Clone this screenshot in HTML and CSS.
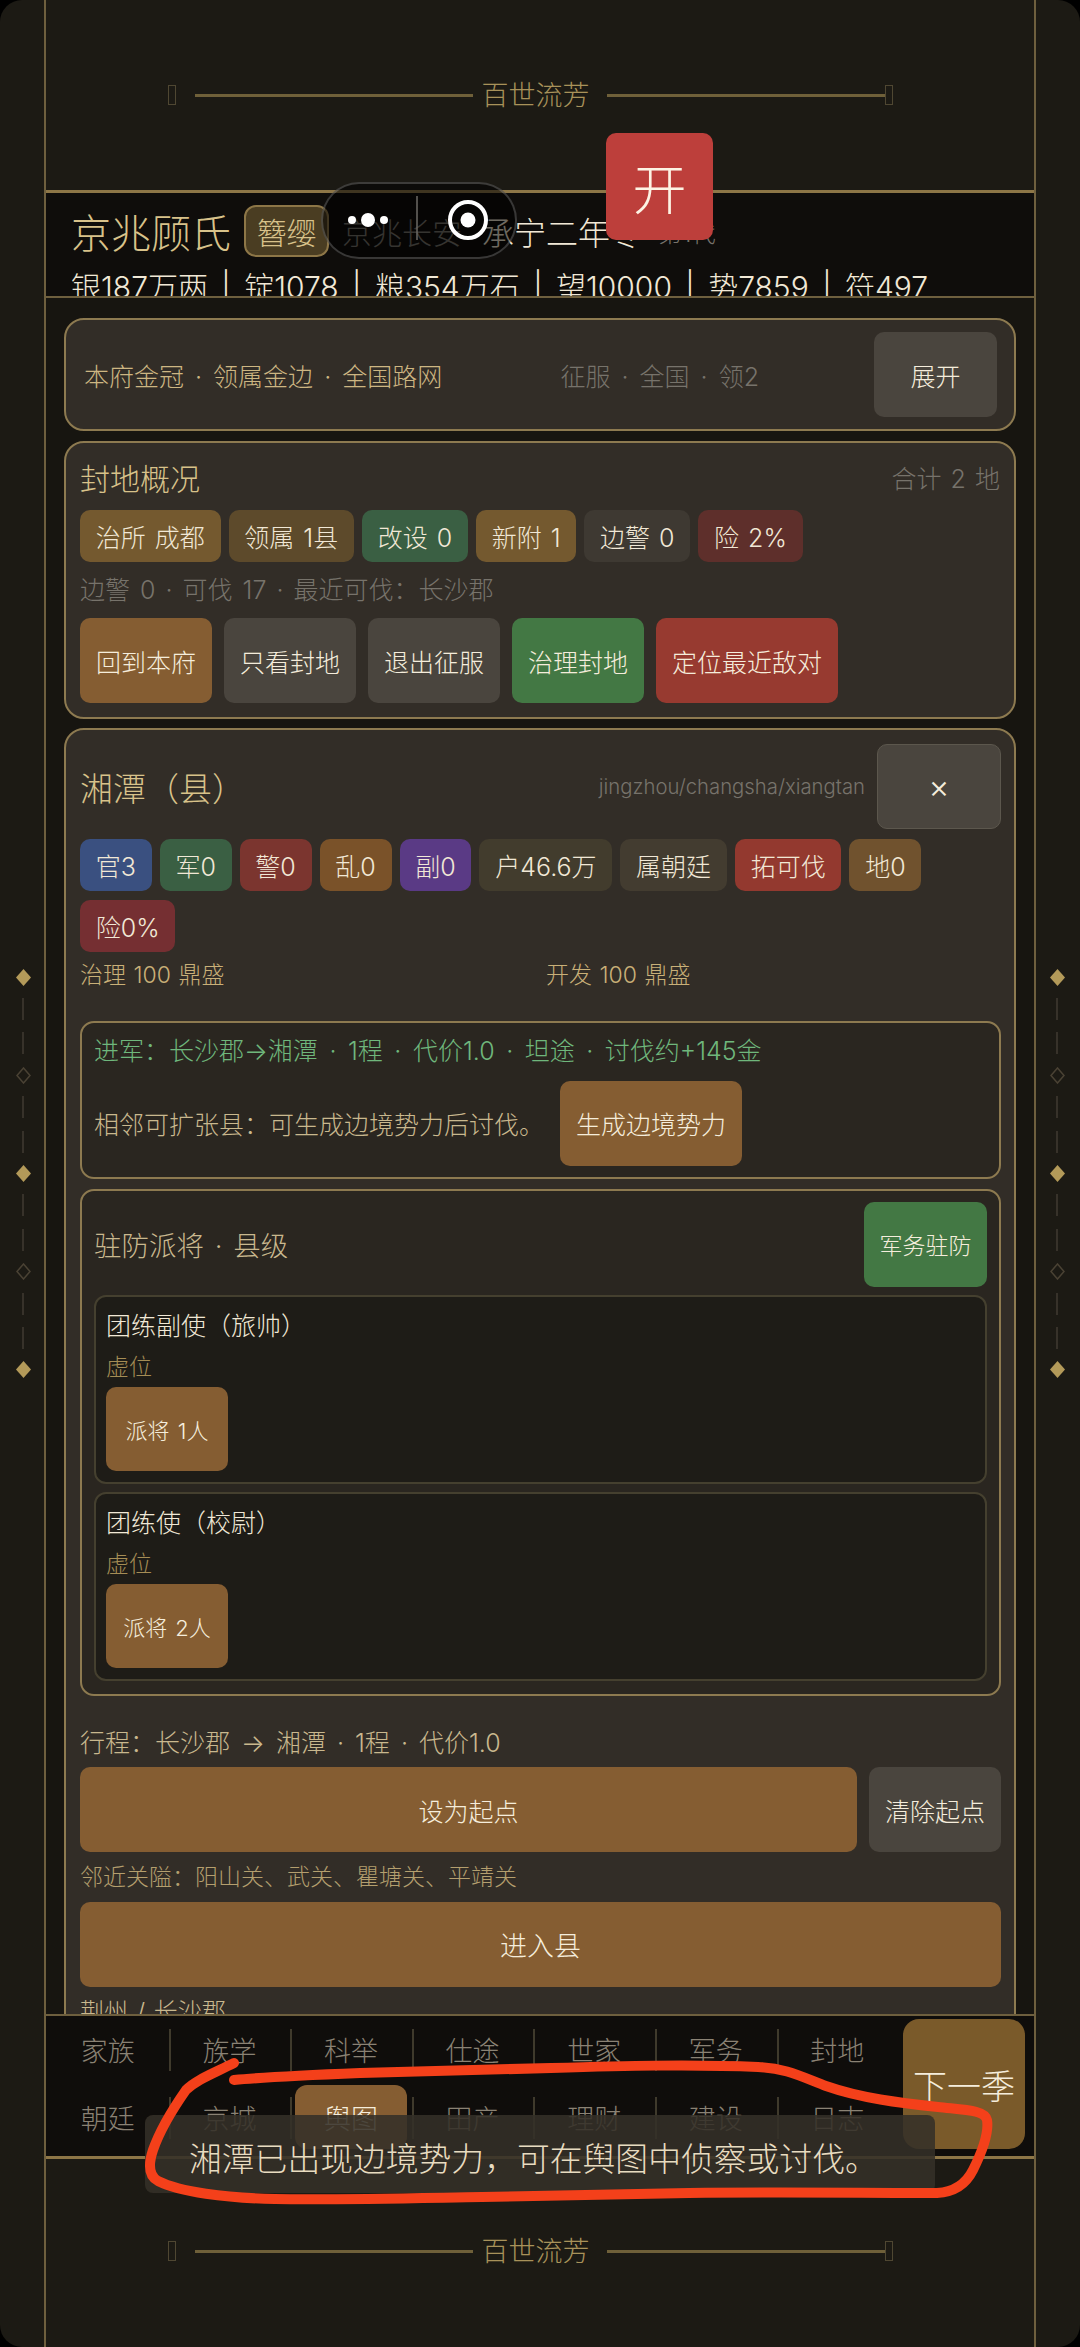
FILE: index.html
```html
<!DOCTYPE html>
<html lang="zh-CN">
<head>
    <meta charset="UTF-8">
    <meta name="viewport" content="width=device-width, initial-scale=1.0">
    <title>百世流芳</title>
    <link rel="stylesheet" href="styles.css">
</head>
<body>
<div class="screen">
    <!-- Left ornament -->
    <div class="side side-l">
        <svg class="gem" viewBox="0 0 15 17"><polygon class="gem-on" points="7.5,0 15,8.5 7.5,17 0,8.5"/></svg>
        <i class="dash"></i><i class="dash"></i>
        <svg class="gem" viewBox="0 0 15 17"><polygon class="gem-off" points="7.5,1 14,8.5 7.5,16 1,8.5"/></svg>
        <i class="dash"></i><i class="dash"></i>
        <svg class="gem" viewBox="0 0 15 17"><polygon class="gem-on" points="7.5,0 15,8.5 7.5,17 0,8.5"/></svg>
        <i class="dash"></i><i class="dash"></i>
        <svg class="gem" viewBox="0 0 15 17"><polygon class="gem-off" points="7.5,1 14,8.5 7.5,16 1,8.5"/></svg>
        <i class="dash"></i><i class="dash"></i>
        <svg class="gem" viewBox="0 0 15 17"><polygon class="gem-on" points="7.5,0 15,8.5 7.5,17 0,8.5"/></svg>
    </div>

    <div class="frame">
        <div class="deco deco-top">
            <i class="deco-end"></i><i class="deco-line"></i>
            <span class="deco-text">百世流芳</span>
            <i class="deco-line"></i><i class="deco-end"></i>
        </div>

        <!-- Header -->
        <div class="head">
            <div class="head-row">
                <span class="clan">京兆顾氏</span>
                <span class="rank">簪缨</span>
                <span class="place">京兆长安</span>
                <span class="date">承宁二年冬</span>
                <span class="gen">第1代</span>
            </div>
            <div class="res">银187万两 | 锭1078 | 粮354万石 | 望10000 | 势7859 | 符497</div>
        </div>

        <!-- Main content -->
        <div class="main">
            <div class="card card-legend">
                <span class="legend">本府金冠 · 领属金边 · 全国路网</span>
                <span class="conquest">征服 · 全国 · 领2</span>
                <button class="btn btn-gray">展开</button>
            </div>

            <div class="card card-fief">
                <div class="card-head">
                    <span class="card-title">封地概况</span>
                    <span class="muted">合计 2 地</span>
                </div>
                <div class="tags">
                    <span class="tag t-gold">治所 成都</span>
                    <span class="tag t-umber">领属 1县</span>
                    <span class="tag t-green">改设 0</span>
                    <span class="tag t-gold">新附 1</span>
                    <span class="tag t-stone">边警 0</span>
                    <span class="tag t-wine">险 2%</span>
                </div>
                <div class="muted fief-note">边警 0 · 可伐 17 · 最近可伐：长沙郡</div>
                <div class="btn-row">
                    <button class="btn btn-brown">回到本府</button>
                    <button class="btn btn-gray">只看封地</button>
                    <button class="btn btn-gray">退出征服</button>
                    <button class="btn btn-green">治理封地</button>
                    <button class="btn btn-red">定位最近敌对</button>
                </div>
            </div>

            <div class="card card-county">
                <div class="county-head">
                    <span class="county-name">湘潭（县）</span>
                    <span class="county-path">jingzhou/changsha/xiangtan</span>
                    <button class="btn btn-gray btn-close">×</button>
                </div>
                <div class="tags county-tags">
                    <span class="tag t-blue">官3</span>
                    <span class="tag t-green">军0</span>
                    <span class="tag t-red">警0</span>
                    <span class="tag t-orange">乱0</span>
                    <span class="tag t-purple">副0</span>
                    <span class="tag t-olive">户46.6万</span>
                    <span class="tag t-stone2">属朝廷</span>
                    <span class="tag t-scarlet">拓可伐</span>
                    <span class="tag t-gold2">地0</span>
                    <span class="tag t-rose">险0%</span>
                </div>
                <div class="stats">
                    <span>治理 100 鼎盛</span>
                    <span>开发 100 鼎盛</span>
                </div>

                <div class="box box-march">
                    <div class="march">进军：长沙郡→湘潭 · 1程 · 代价1.0 · 坦途 · 讨伐约+145金</div>
                    <div class="expand">
                        <span>相邻可扩张县：可生成边境势力后讨伐。</span>
                        <button class="btn btn-brown">生成边境势力</button>
                    </div>
                </div>

                <div class="box box-garrison">
                    <div class="garrison-head">
                        <span>驻防派将 · 县级</span>
                        <button class="btn btn-green btn-small">军务驻防</button>
                    </div>
                    <div class="post">
                        <div class="post-name">团练副使（旅帅）</div>
                        <div class="post-state">虚位</div>
                        <button class="btn btn-brown btn-send">派将 1人</button>
                    </div>
                    <div class="post">
                        <div class="post-name">团练使（校尉）</div>
                        <div class="post-state">虚位</div>
                        <button class="btn btn-brown btn-send">派将 2人</button>
                    </div>
                </div>

                <div class="route">行程：长沙郡 → 湘潭 · 1程 · 代价1.0</div>
                <div class="route-btns">
                    <button class="btn btn-brown btn-wide">设为起点</button>
                    <button class="btn btn-gray">清除起点</button>
                </div>
                <div class="passes">邻近关隘：阳山关、武关、瞿塘关、平靖关</div>
                <button class="btn btn-brown btn-enter">进入县</button>
                <div class="region">荆州 / 长沙郡</div>
            </div>
        </div>

        <!-- Bottom nav -->
        <div class="nav">
            <div class="tabs">
                <span class="tab">家族</span>
                <span class="tab">族学</span>
                <span class="tab">科举</span>
                <span class="tab">仕途</span>
                <span class="tab">世家</span>
                <span class="tab">军务</span>
                <span class="tab">封地</span>
                <span class="tab">朝廷</span>
                <span class="tab">京城</span>
                <span class="tab tab-on">舆图</span>
                <span class="tab">田产</span>
                <span class="tab">理财</span>
                <span class="tab">建设</span>
                <span class="tab">日志</span>
            </div>
            <button class="next">下一季</button>
        </div>

        <div class="deco deco-bottom">
            <i class="deco-end"></i><i class="deco-line"></i>
            <span class="deco-text">百世流芳</span>
            <i class="deco-line"></i><i class="deco-end"></i>
        </div>
    </div>

    <!-- Right ornament -->
    <div class="side side-r">
        <svg class="gem" viewBox="0 0 15 17"><polygon class="gem-on" points="7.5,0 15,8.5 7.5,17 0,8.5"/></svg>
        <i class="dash"></i><i class="dash"></i>
        <svg class="gem" viewBox="0 0 15 17"><polygon class="gem-off" points="7.5,1 14,8.5 7.5,16 1,8.5"/></svg>
        <i class="dash"></i><i class="dash"></i>
        <svg class="gem" viewBox="0 0 15 17"><polygon class="gem-on" points="7.5,0 15,8.5 7.5,17 0,8.5"/></svg>
        <i class="dash"></i><i class="dash"></i>
        <svg class="gem" viewBox="0 0 15 17"><polygon class="gem-off" points="7.5,1 14,8.5 7.5,16 1,8.5"/></svg>
        <i class="dash"></i><i class="dash"></i>
        <svg class="gem" viewBox="0 0 15 17"><polygon class="gem-on" points="7.5,0 15,8.5 7.5,17 0,8.5"/></svg>
    </div>

    <!-- Floating layers -->
    <div class="open-btn">开</div>

    <div class="capsule">
        <svg class="capsule-icon" viewBox="0 0 196 77">
            <line x1="96" y1="14" x2="96" y2="58" stroke="#6d6a64" stroke-width="1.5"/>
            <circle cx="31" cy="38" r="4" fill="#fff"/>
            <circle cx="47" cy="38" r="7" fill="#fff"/>
            <circle cx="63" cy="38" r="4" fill="#fff"/>
            <circle cx="147" cy="38" r="18" fill="none" stroke="#fff" stroke-width="4"/>
            <circle cx="147" cy="38" r="7.5" fill="#fff"/>
        </svg>
    </div>

    <div class="toast">湘潭已出现边境势力，可在舆图中侦察或讨伐。</div>

    <svg class="scribble" viewBox="0 0 1080 2347">
        <path d="M234 2063 C212 2074 196 2080 186 2090 C172 2110 160 2130 153 2150 C148 2165 149 2176 158 2181 C180 2192 225 2198 275 2199 C340 2200 420 2198 482 2197 C560 2196 630 2194 689 2193 C780 2192 860 2193 937 2193 C955 2192 966 2184 973 2170 C982 2152 989 2132 987 2120 C985 2110 965 2110 938 2107 C900 2103 860 2098 826 2086 C800 2076 785 2068 758 2067 C690 2064 620 2066 551 2068 C480 2070 420 2071 360 2073 C310 2075 265 2077 234 2080"/>
    </svg>
</div>
</body>
</html>
```

FILE: styles.css
```css
* {
    box-sizing: border-box;
}

html, body {
    margin: 0;
    padding: 0;
    background-color: #000;
}

body {
    font-family: Inter, "Noto Sans CJK SC", sans-serif;
    font-weight: 300;
    word-spacing: 2px;
    color: #f1e8d6;
}

button {
    font-family: inherit;
    font-weight: inherit;
    word-spacing: inherit;
}

.screen {
    position: relative;
    display: flex;
    width: 1080px;
    height: 2347px;
    overflow: hidden;
    background-color: #1c1a14;
    border-radius: 22px;
}

/* Side ornaments */
.side {
    width: 44px;
    flex: none;
    display: flex;
    flex-direction: column;
    align-items: center;
    justify-content: center;
    gap: 12.4px;
}

.side-l {
    padding-left: 2px;
}

.side-r {
    padding-right: 2px;
}

.gem {
    width: 15px;
    height: 17px;
    display: block;
}

.gem-on {
    fill: #b39a59;
}

.gem-off {
    fill: none;
    stroke: #4a4234;
    stroke-width: 1.5;
}

.dash {
    width: 2px;
    height: 22px;
    background-color: #37322a;
}

/* Frame */
.frame {
    flex: 1;
    min-width: 0;
    display: flex;
    flex-direction: column;
    border-left: 2px solid #6e5f3e;
    border-right: 2px solid #6e5f3e;
}

.deco {
    flex: none;
    display: flex;
    align-items: center;
    justify-content: center;
    padding-right: 20px;
    color: #a8925a;
    font-size: 27px;
    line-height: 1;
}

.deco-top {
    height: 193px;
    border-bottom: 3px solid #8d7647;
}

.deco-bottom {
    height: 188px;
    padding-bottom: 4px;
}

.deco-end {
    width: 8px;
    height: 20px;
    border: 1px solid #4f4732;
    margin-right: 19px;
}

.deco-line {
    width: 278px;
    height: 3px;
    background-color: #6f6039;
}

.deco-line + .deco-end {
    margin-right: 0;
}

.deco-text {
    margin: 0 17px 0 9px;
}

/* Header */
.head {
    flex: none;
    height: 105px;
    padding: 12px 25px 0;
    overflow: hidden;
    background-color: #0f0d0b;
    border-bottom: 2px solid #6e5f3e;
}

.head-row {
    display: flex;
    align-items: center;
    height: 52px;
}

.clan {
    font-size: 40px;
    color: #d8c28a;
    width: 173px;
}

.rank {
    width: 85px;
    height: 52px;
    display: flex;
    align-items: center;
    justify-content: center;
    font-size: 30px;
    color: #d8c28a;
    background-color: #4a3d22;
    border: 2px solid #8d7647;
    border-radius: 12px;
}

.place {
    margin-left: 13px;
    width: 140px;
    font-size: 30px;
    color: #77736b;
}

.date {
    font-size: 32px;
    width: 176px;
    color: #f1e8d6;
}

.gen {
    font-size: 24px;
    color: #77736b;
}

.res {
    margin-top: 8px;
    font-size: 30px;
    line-height: 44px;
    word-spacing: 5px;
    white-space: nowrap;
}

/* Scrolling content */
.main {
    flex: 1;
    min-height: 0;
    overflow: hidden;
    padding: 20px 18px 0;
    display: flex;
    flex-direction: column;
    gap: 9px;
    background-color: #171510;
}

.card {
    flex: none;
    background-color: #322d27;
    border: 2px solid #8d7a50;
    border-radius: 20px;
    padding: 12px 14px 14px;
}

.card-legend {
    height: 113px;
    padding: 12px 17px 12px 18px;
    display: flex;
    align-items: center;
    font-size: 25px;
    word-spacing: 4px;
}

.legend {
    flex: 1;
    color: #cdb682;
}

.conquest {
    color: #77736b;
    margin-right: 115px;
}

.card-fief {
    margin-top: 1px;
}

.card-head {
    display: flex;
    align-items: center;
    justify-content: space-between;
    height: 44px;
    margin-bottom: 11px;
}

.card-title {
    font-size: 30px;
    color: #d8c28a;
}

.muted {
    font-size: 25px;
    color: #77736b;
}

.tags {
    display: flex;
    flex-wrap: wrap;
    gap: 8px;
}

.tag {
    height: 52px;
    padding: 0 15.75px;
    display: flex;
    align-items: center;
    font-size: 25px;
    border-radius: 10px;
}

.t-gold { background-color: #74592f; }
.t-umber { background-color: #5d4a2b; }
.t-green { background-color: #3a5f43; }
.t-stone { background-color: #3e3932; }
.t-wine { background-color: #5e2f2b; }
.t-blue { background-color: #3a5080; }
.t-red { background-color: #7b352f; }
.t-orange { background-color: #7a5229; }
.t-purple { background-color: #5a3a85; }
.t-olive { background-color: #423c2d; }
.t-stone2 { background-color: #433c30; }
.t-scarlet { background-color: #93392f; }
.t-gold2 { background-color: #70522e; }
.t-rose { background-color: #752f32; }

.fief-note {
    margin-top: 10px;
    line-height: 36px;
    word-spacing: 3px;
}

.btn-row {
    display: flex;
    gap: 12px;
    margin-top: 10px;
}

.btn {
    height: 85px;
    padding: 0 16px;
    border: none;
    border-radius: 10px;
    font-size: 25px;
    color: #f5eddc;
    white-space: nowrap;
}

.btn-brown { background-color: #855d32; }
.btn-gray { background-color: #4a453e; }
.btn-green { background-color: #437844; }
.btn-red { background-color: #973a30; }

.card-legend .btn {
    width: 123px;
}

/* County detail */
.card-county {
    padding: 14px 13px 14px 14px;
}

.county-head {
    display: flex;
    align-items: center;
    height: 85px;
}

.county-name {
    flex: 1;
    font-size: 33px;
    color: #d8c28a;
}

.county-path {
    font-size: 20.3px;
    word-spacing: 0;
    color: #77736b;
    margin-right: 12px;
}

.btn-close {
    width: 124px;
    border: 1px solid #5c574d;
    font-size: 32px;
}

.county-tags {
    margin-top: 10px;
    row-gap: 9px;
}

.stats {
    display: grid;
    grid-template-columns: 466px 1fr;
    margin-top: 5.5px;
    font-size: 23px;
    line-height: 34px;
    word-spacing: 1px;
    color: #c9b078;
}

.box {
    background-color: #2a2620;
    border: 2px solid #8d7a50;
    border-radius: 14px;
    padding: 14px 12px;
}

.box-march {
    margin-top: 29px;
    height: 158px;
    padding-top: 9px;
}

.march {
    font-size: 25px;
    line-height: 38px;
    word-spacing: 4.5px;
    color: #6fb77c;
    white-space: nowrap;
}

.expand {
    display: flex;
    align-items: center;
    gap: 16px;
    margin-top: 11px;
    font-size: 25px;
    color: #c9b88e;
}

.box-garrison {
    margin-top: 10px;
    height: 507px;
    padding-top: 11px;
}

.garrison-head {
    display: flex;
    align-items: center;
    justify-content: space-between;
    font-size: 27.5px;
    word-spacing: 3px;
    color: #c9b88e;
}

.btn-small {
    font-size: 23px;
    width: 123px;
    padding: 0;
}

.post {
    height: 189px;
    margin-top: 8px;
    padding: 9px 10px 7px;
    background-color: #1e1c17;
    border: 2px solid #45402f;
    border-radius: 12px;
}

.post-name {
    font-size: 25px;
    line-height: 40px;
}

.post-state {
    font-size: 23px;
    line-height: 32px;
    margin-top: 5.5px;
    color: #a58d55;
}

.btn-send {
    display: block;
    width: 122px;
    height: 84px;
    padding: 0;
    font-size: 22px;
    margin-top: 3.5px;
}

.route {
    margin-top: 31.5px;
    font-size: 25px;
    line-height: 32px;
    word-spacing: 4px;
    color: #c9b88e;
}

.route-btns {
    display: flex;
    gap: 12px;
    margin-top: 8px;
}

.btn-wide {
    flex: 1;
}

.passes {
    margin-top: 8px;
    font-size: 23px;
    line-height: 34px;
    color: #b49f6e;
}

.btn-enter {
    display: block;
    width: 100%;
    margin-top: 7.5px;
    font-size: 27px;
}

.region {
    margin-top: 7px;
    font-size: 24px;
    line-height: 36px;
    color: #c9b88e;
}

/* Bottom nav */
.nav {
    flex: none;
    height: 145px;
    display: flex;
    align-items: flex-start;
    background-color: #0f0d0b;
    border-top: 2px solid #6e5f3e;
    border-bottom: 3px solid #8d7647;
}

.tabs {
    flex: none;
    width: 857px;
    padding: 1px 0 0 1px;
    display: grid;
    grid-template-columns: repeat(7, 121.6px);
    grid-auto-rows: 64px;
    row-gap: 4px;
}

.tab {
    position: relative;
    margin: 0 5px;
    display: flex;
    align-items: center;
    justify-content: center;
    font-size: 27px;
    color: #8a8274;
    border-radius: 12px;
}

/* divider between tabs */
.tab:not(:nth-child(7n))::after {
    content: "";
    position: absolute;
    right: -7px;
    top: 12px;
    width: 2px;
    height: 42px;
    background-color: #3f3a2c;
}

.tab-on {
    background-color: #855d32;
    color: #f5eddc;
}

.next {
    width: 122px;
    height: 130px;
    margin-top: 3px;
    padding: 0;
    border: none;
    border-radius: 16px;
    font-size: 34px;
    color: #f5eddc;
    background-color: #7a5a2a;
}

/* Overlays */
.open-btn {
    position: absolute;
    left: 606px;
    top: 133px;
    width: 107px;
    height: 107px;
    display: flex;
    align-items: center;
    justify-content: center;
    font-size: 54px;
    color: #fdf3e4;
    background-color: #bd3f3b;
    border-radius: 10px;
}

.capsule {
    position: absolute;
    left: 321px;
    top: 182px;
    width: 196px;
    height: 77px;
    background-color: rgba(0, 0, 0, 0.55);
    border: 2px solid rgba(255, 255, 255, 0.2);
    border-radius: 38px;
}

.capsule-icon {
    display: block;
    width: 196px;
    height: 77px;
    margin: -2px;
}

.toast {
    position: absolute;
    left: 145px;
    top: 2115px;
    width: 790px;
    height: 78px;
    padding: 4px 0 0 44px;
    display: flex;
    align-items: center;
    font-size: 32.8px;
    color: #e8dcc0;
    background-color: rgba(52, 48, 40, 0.88);
    border-radius: 8px;
}

.scribble {
    position: absolute;
    left: 0;
    top: 0;
    width: 1080px;
    height: 2347px;
    pointer-events: none;
}

.scribble path {
    fill: none;
    stroke: #f4401a;
    stroke-width: 10;
    stroke-linecap: round;
    stroke-linejoin: round;
}
```
